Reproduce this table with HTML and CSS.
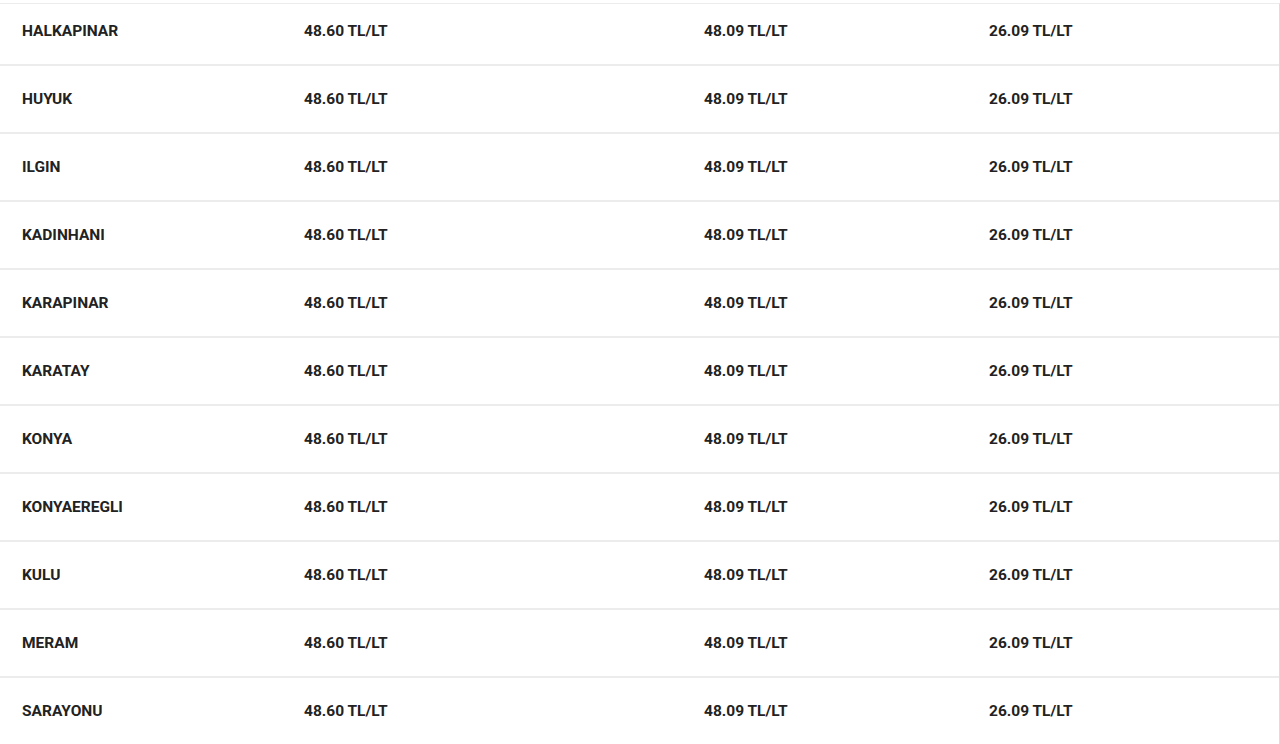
FILE: index.html
```html
<!DOCTYPE html>
<html lang="tr">
<head>
<meta charset="utf-8">
<title>Akaryakıt Fiyatları</title>
<link rel="stylesheet" href="styles.css">
</head>
<body>
<div class="table">
  <div class="row"><div class="cell name">HALKAPINAR</div><div class="cell">48.60 TL/LT</div><div class="cell">48.09 TL/LT</div><div class="cell">26.09 TL/LT</div></div>
  <div class="row"><div class="cell name">HUYUK</div><div class="cell">48.60 TL/LT</div><div class="cell">48.09 TL/LT</div><div class="cell">26.09 TL/LT</div></div>
  <div class="row"><div class="cell name">ILGIN</div><div class="cell">48.60 TL/LT</div><div class="cell">48.09 TL/LT</div><div class="cell">26.09 TL/LT</div></div>
  <div class="row"><div class="cell name">KADINHANI</div><div class="cell">48.60 TL/LT</div><div class="cell">48.09 TL/LT</div><div class="cell">26.09 TL/LT</div></div>
  <div class="row"><div class="cell name">KARAPINAR</div><div class="cell">48.60 TL/LT</div><div class="cell">48.09 TL/LT</div><div class="cell">26.09 TL/LT</div></div>
  <div class="row"><div class="cell name">KARATAY</div><div class="cell">48.60 TL/LT</div><div class="cell">48.09 TL/LT</div><div class="cell">26.09 TL/LT</div></div>
  <div class="row"><div class="cell name">KONYA</div><div class="cell">48.60 TL/LT</div><div class="cell">48.09 TL/LT</div><div class="cell">26.09 TL/LT</div></div>
  <div class="row"><div class="cell name">KONYAEREGLI</div><div class="cell">48.60 TL/LT</div><div class="cell">48.09 TL/LT</div><div class="cell">26.09 TL/LT</div></div>
  <div class="row"><div class="cell name">KULU</div><div class="cell">48.60 TL/LT</div><div class="cell">48.09 TL/LT</div><div class="cell">26.09 TL/LT</div></div>
  <div class="row"><div class="cell name">MERAM</div><div class="cell">48.60 TL/LT</div><div class="cell">48.09 TL/LT</div><div class="cell">26.09 TL/LT</div></div>
  <div class="row"><div class="cell name">SARAYONU</div><div class="cell">48.60 TL/LT</div><div class="cell">48.09 TL/LT</div><div class="cell">26.09 TL/LT</div></div>
</div>
</body>
</html>
```
FILE: styles.css
```css
html, body {
  margin: 0;
  padding: 0;
  background: #ffffff;
}
body {
  font-family: Roboto, "Liberation Sans", sans-serif;
  color: #222222;
  overflow: hidden;
}
.table {
  margin-top: 3px;
  width: 1280px;
  box-sizing: border-box;
  border-top: 1px solid #ececec;
  border-right: 1px solid #dddddd;
}
.row {
  display: grid;
  grid-template-columns: 282px 400px 285px 1fr;
  padding: 24px 0 24px;
  border-bottom: 2px solid #ececec;
}
.row:first-child {
  padding-top: 18px;
}
.cell {
  padding-left: 22px;
  font-size: 15.5px;
  line-height: 18px;
  font-weight: 700;
  white-space: nowrap;
}
```
